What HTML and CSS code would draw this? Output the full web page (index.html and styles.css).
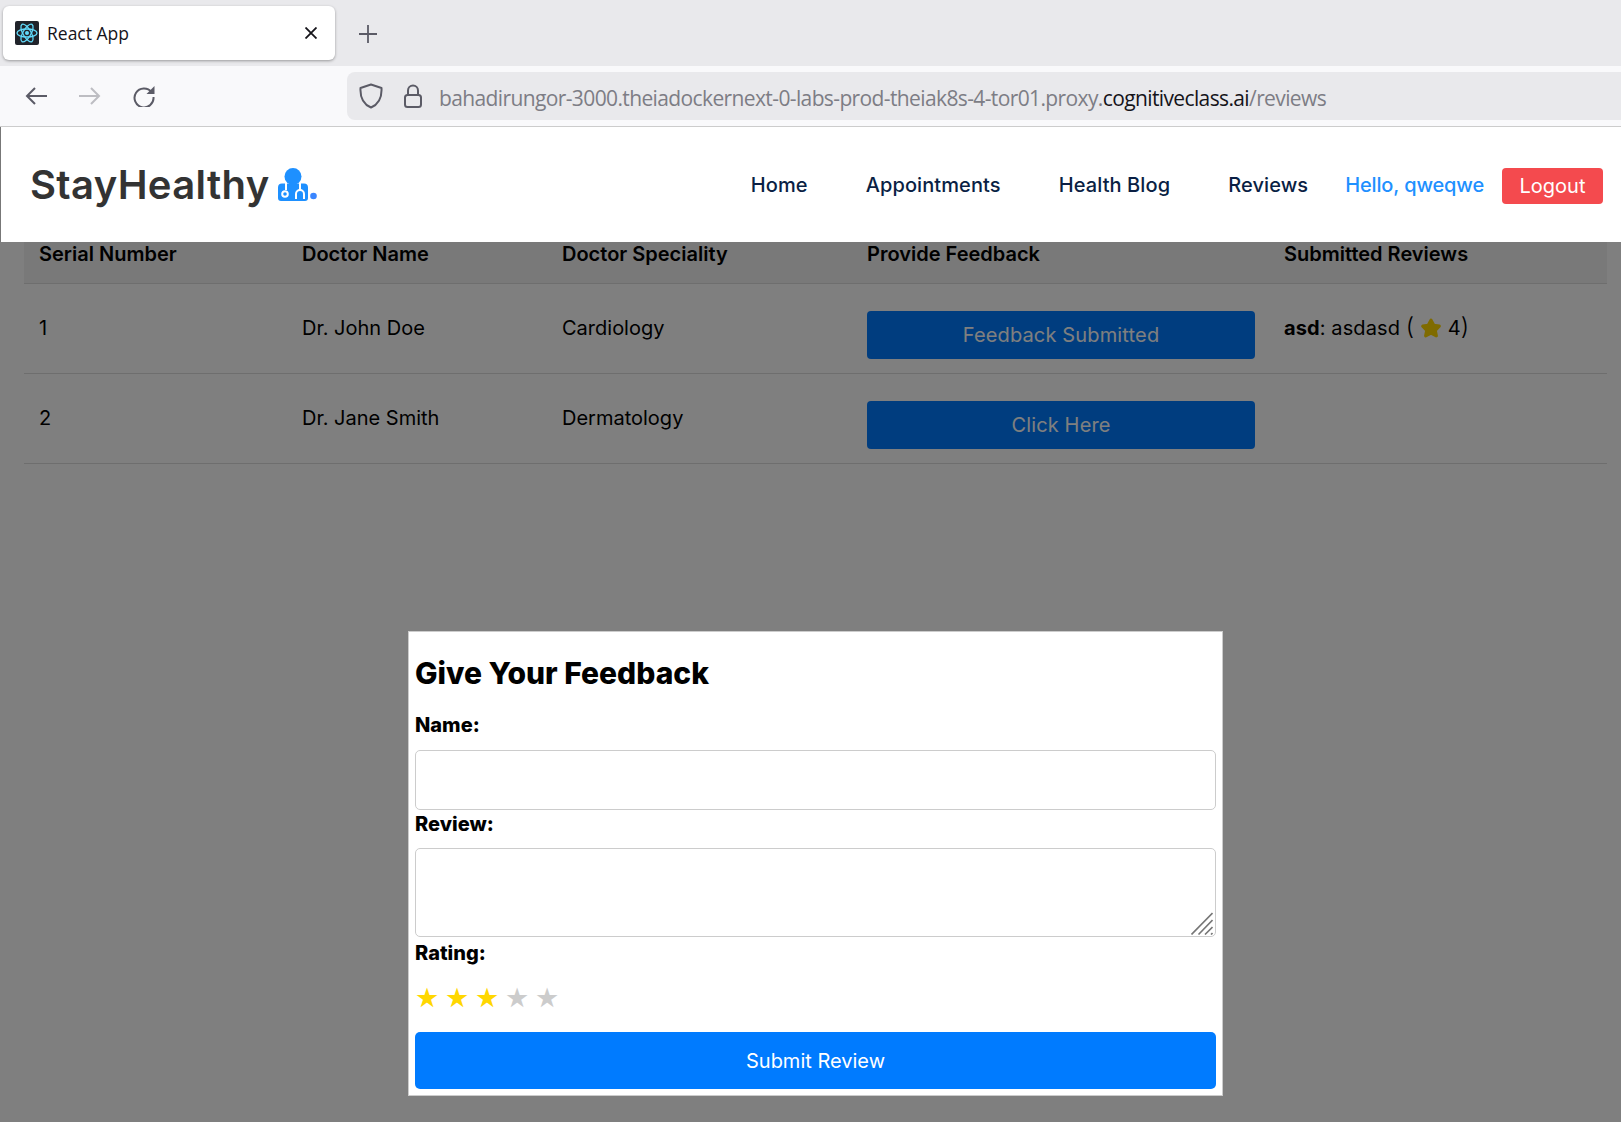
FILE: index.html
```html
<!DOCTYPE html>
<html lang="en">
<head>
    <meta charset="UTF-8">
    <title>React App</title>
    <link rel="stylesheet" href="styles.css">
</head>
<body>
    <div class="tabstrip">
        <div class="tab">
            <svg class="favicon" viewBox="0 0 24 24">
                <rect width="24" height="24" rx="2" fill="#20232a"/>
                <g fill="none" stroke="#61dafb" stroke-width="1.3">
                    <ellipse cx="12" cy="12" rx="10" ry="4"/>
                    <ellipse cx="12" cy="12" rx="10" ry="4" transform="rotate(60 12 12)"/>
                    <ellipse cx="12" cy="12" rx="10" ry="4" transform="rotate(120 12 12)"/>
                </g>
                <circle cx="12" cy="12" r="2" fill="#61dafb"/>
            </svg>
            <span class="tab-title">React App</span>
            <svg class="tab-close" viewBox="0 0 12 12">
                <path d="M0.500 0.500 11.500 11.500M11.500 0.500 0.500 11.500" stroke="#15141a" stroke-width="1.8" fill="none"/>
            </svg>
        </div>
        <svg class="new-tab" viewBox="0 0 18 18">
            <path d="M9 0V18M0 9H18" stroke="#5b5b66" stroke-width="1.8" fill="none"/>
        </svg>
    </div>
    <div class="toolbar">
        <svg class="tool tool-first" viewBox="0 0 22 20">
            <path d="M22 10H2M10 2 2 10l8 8" stroke="#5b5b66" stroke-width="2" fill="none"/>
        </svg>
        <svg class="tool" viewBox="0 0 22 20">
            <path d="M0 10H20M12 2l8 8-8 8" stroke="#bdbdc2" stroke-width="2" fill="none"/>
        </svg>
        <svg class="tool tool-reload" viewBox="0 0 22 22">
            <path d="M18.500 7A9.500 9.500 0 1 0 20.500 12" stroke="#5b5b66" stroke-width="2" fill="none"/>
            <path d="M21.500 1V9H13.500Z" fill="#5b5b66"/>
        </svg>
        <div class="urlbar">
            <svg class="shield" viewBox="0 0 24 26">
                <path d="M12 1.500 22.500 5C23 14 20 21 12 24.500 4 21 1 14 1.500 5Z" stroke="#5b5b66" stroke-width="2" fill="none" stroke-linejoin="round"/>
            </svg>
            <svg class="lock" viewBox="0 0 18 24">
                <path d="M4 11V6.500a5 5 0 0 1 10 0V11" stroke="#5b5b66" stroke-width="2" fill="none"/>
                <rect x="1" y="11" width="16" height="12" rx="2.500" stroke="#5b5b66" stroke-width="2" fill="none"/>
            </svg>
            <span class="url">bahadirungor-3000.theiadockernext-0-labs-prod-theiak8s-4-tor01.proxy.<span class="url-host">cognitiveclass.ai</span>/reviews</span>
        </div>
    </div>
    <nav class="navbar">
        <div class="logo">
            <span class="logo-text">StayHealthy</span>
            <svg class="logo-icon" viewBox="0 0 40 34">
                <circle cx="16" cy="8.500" r="8.500" fill="#1e90ff"/>
                <path d="M5 15.500h22a4 4 0 0 1 4 4V30a3 3 0 0 1-3 3H4a3 3 0 0 1-3-3V19.500a4 4 0 0 1 4-4Z" fill="#1e90ff"/>
                <g fill="none" stroke="#fff" stroke-width="2">
                    <path d="M9 15V22"/>
                    <circle cx="8" cy="26" r="2.800"/>
                    <path d="M19 31v-5a4 4 0 0 1 8 0v5"/>
                    <path d="M23 15v7"/>
                </g>
                <circle cx="36.500" cy="28" r="3.300" fill="#3a86ff"/>
            </svg>
        </div>
        <ul class="nav-links">
            <li class="nav-item">Home</li>
            <li class="nav-item">Appointments</li>
            <li class="nav-item">Health Blog</li>
            <li class="nav-item">Reviews</li>
            <li class="nav-user">Hello, qweqwe</li>
            <li><button class="logout">Logout</button></li>
        </ul>
    </nav>
    <main class="content">
        <table class="reviews">
            <colgroup>
                <col class="col-serial">
                <col class="col-name">
                <col class="col-speciality">
                <col class="col-feedback">
                <col class="col-submitted">
            </colgroup>
            <thead>
                <tr>
                    <th>Serial Number</th>
                    <th>Doctor Name</th>
                    <th>Doctor Speciality</th>
                    <th>Provide Feedback</th>
                    <th>Submitted Reviews</th>
                </tr>
            </thead>
            <tbody>
                <tr>
                    <td>1</td>
                    <td>Dr. John Doe</td>
                    <td>Cardiology</td>
                    <td class="cell-action"><button class="feedback-btn">Feedback Submitted</button></td>
                    <td class="cell-review">
                        <strong>asd</strong>: asdasd <span class="paren">(</span>
                        <svg class="small-star" viewBox="0 0 24 24">
                            <path d="M12 3.500 15 9 21 10 16.600 14.500 17.800 20.500 12 17.600 6.200 20.500 7.400 14.500 3 10 9 9Z" fill="#ffd700" stroke="#ffd700" stroke-width="3.500" stroke-linejoin="round"/>
                        </svg>
                        4<span class="paren">)</span>
                    </td>
                </tr>
                <tr>
                    <td>2</td>
                    <td>Dr. Jane Smith</td>
                    <td>Dermatology</td>
                    <td class="cell-action"><button class="feedback-btn">Click Here</button></td>
                    <td></td>
                </tr>
            </tbody>
        </table>
        <div class="overlay">
            <form class="modal">
                <h2 class="modal-title">Give Your Feedback</h2>
                <label class="field-label">Name:</label>
                <input class="field-input" type="text">
                <label class="field-label label-review">Review:</label>
                <div class="area-wrap">
                    <textarea class="field-area"></textarea>
                    <svg class="resize-handle" viewBox="0 0 22 23">
                        <path d="M0.500 22.500 21.500 1M7.500 22.500 21.500 8M14 22.500 21.500 15M20 22.500 21.500 21" stroke="#777" stroke-width="1.600" fill="none"/>
                    </svg>
                </div>
                <label class="field-label label-rating">Rating:</label>
                <div class="stars">
                    <span class="star star-on">★</span>
                    <span class="star star-on">★</span>
                    <span class="star star-on">★</span>
                    <span class="star">★</span>
                    <span class="star">★</span>
                </div>
                <button class="submit-btn" type="button">Submit Review</button>
            </form>
        </div>
    </main>
</body>
</html>
```

FILE: styles.css
```css
* {
    box-sizing: border-box;
}
html, body {
    height: 100%;
}
body {
    margin: 0;
    display: flex;
    flex-direction: column;
    overflow: hidden;
    background-color: #fff;
    color: #000;
    font-family: 'Inter', 'Noto Sans', sans-serif;
}

/* browser chrome */
.tabstrip {
    height: 66px;
    flex-shrink: 0;
    display: flex;
    align-items: flex-start;
    padding: 6px 0 0 3px;
    background-color: #e9e9ec;
}
.tab {
    width: 332px;
    height: 54px;
    display: flex;
    align-items: center;
    padding: 0 14px 0 12px;
    background-color: #fff;
    border-radius: 6px;
    box-shadow: 0 1px 3px rgba(0, 0, 0, 0.35);
}
.favicon {
    width: 24px;
    height: 24px;
}
.tab-title {
    margin-left: 8px;
    font-family: 'Open Sans', sans-serif;
    font-size: 17.500px;
    color: #15141a;
    flex-grow: 1;
}
.tab-close {
    width: 12px;
    height: 12px;
    margin-right: 4px;
}
.new-tab {
    width: 18px;
    height: 18px;
    margin: 19px 0 0 24px;
}
.toolbar {
    height: 61px;
    flex-shrink: 0;
    display: flex;
    align-items: flex-start;
    padding: 6px 0 0 25px;
    background-color: #f9f9fb;
    border-bottom: 1px solid #ccc;
}
.tool {
    width: 22px;
    height: 20px;
    margin: 14px 32px 0 0;
}
.tool-reload {
    height: 22px;
    margin: 13px 0 0 0;
}
.urlbar {
    margin-left: 192px;
    flex-grow: 1;
    height: 48px;
    display: flex;
    align-items: center;
    padding-left: 12px;
    background-color: #e9e9ec;
    border-radius: 8px 0 0 8px;
}
.shield {
    width: 24px;
    height: 26px;
}
.lock {
    width: 18px;
    height: 24px;
    margin-left: 21px;
}
.url {
    margin-left: 17px;
    padding-top: 4px;
    font-family: 'Open Sans', sans-serif;
    font-size: 21px;
    letter-spacing: -0.620px;
    color: #7d7d85;
    white-space: nowrap;
}
.url-host {
    color: #15141a;
}

/* navbar */
.navbar {
    height: 115px;
    flex-shrink: 0;
    display: flex;
    align-items: center;
    justify-content: space-between;
    padding: 0 18px 0 29px;
    background-color: #fff;
    border-left: 1px solid #777;
    position: relative;
    z-index: 2;
}
.logo {
    display: flex;
    align-items: center;
}
.logo-text {
    font-size: 40px;
    font-weight: 600;
    letter-spacing: 0.350px;
    color: #333;
}
.logo-icon {
    width: 40px;
    height: 34px;
    margin: 0 0 0 7px;
}
.nav-links {
    list-style: none;
    display: flex;
    align-items: center;
    margin: 0;
    padding: 0;
    font-size: 20px;
    font-weight: 500;
}
.nav-item {
    color: #0a1f44;
    margin-right: 58px;
    letter-spacing: 0.100px;
}
.nav-item:nth-child(4) {
    margin-right: 37px;
}
.nav-user {
    color: #1e90ff;
    margin-right: 18px;
    letter-spacing: -0.150px;
}
.logout {
    width: 101px;
    height: 36px;
    margin-top: 2px;
    background-color: #f44a4e;
    color: #fff;
    font-family: inherit;
    font-size: 20px;
    border: none;
    border-radius: 4px;
}

/* reviews table */
.content {
    position: relative;
    flex-grow: 1;
    padding: 0 14px 0 24px;
}
.reviews {
    width: 1583px;
    table-layout: fixed;
    border-collapse: collapse;
    font-size: 20px;
}
.col-serial { width: 263px; }
.col-name { width: 260px; }
.col-speciality { width: 305px; }
.col-feedback { width: 417px; }
.col-submitted { width: 338px; }
.reviews th {
    height: 41px;
    padding: 0 15px;
    text-align: left;
    vertical-align: top;
    font-weight: 600;
    line-height: 24px;
    background-color: #f2f2f2;
    border-bottom: 1px solid #ddd;
}
.reviews td {
    height: 90px;
    padding: 0 15px;
    border-bottom: 1px solid #ddd;
}
.reviews td.cell-action {
    padding-right: 14px;
}
.reviews strong {
    font-weight: 700;
}
.cell-review {
    letter-spacing: 0.100px;
}
.paren {
    font-size: 24px;
    font-weight: 300;
    line-height: 0;
}
.feedback-btn {
    width: 100%;
    height: 48px;
    margin-top: 13px;
    display: block;
    background-color: #007bff;
    color: #fff;
    font-family: inherit;
    font-size: 20px;
    letter-spacing: 0.150px;
    border: none;
    border-radius: 4px;
}
.small-star {
    width: 22px;
    height: 22px;
    vertical-align: -4px;
}

/* feedback popup */
.overlay {
    position: absolute;
    top: 0;
    left: 0;
    right: 0;
    bottom: 0;
    z-index: 1;
    display: flex;
    justify-content: center;
    align-items: flex-end;
    padding: 0 0 26px 10px;
    background-color: rgba(0, 0, 0, 0.5);
}
.modal {
    width: 815px;
    height: 465px;
    display: flex;
    flex-direction: column;
    padding: 0 6px;
    background-color: #fff;
    border: 1px solid #ccc;
}
.modal-title {
    margin: 21px 0 0;
    height: 40px;
    font-size: 30px;
    line-height: 40px;
    font-weight: 800;
}
.field-label {
    font-size: 20px;
    font-weight: 800;
    line-height: 24px;
}
.modal-title + .field-label {
    margin-top: 20px;
}
.field-input {
    height: 60px;
    margin-top: 13px;
    border: 1px solid #ccc;
    border-radius: 5px;
}
.label-review {
    margin-top: 2px;
}
.area-wrap {
    position: relative;
    height: 89px;
    margin-top: 12px;
}
.field-area {
    display: block;
    width: 100%;
    height: 100%;
    resize: none;
    border: 1px solid #ccc;
    border-radius: 5px;
}
.resize-handle {
    position: absolute;
    right: 3px;
    bottom: 2px;
    width: 22px;
    height: 23px;
}
.label-rating {
    margin-top: 4px;
}
.stars {
    display: flex;
    margin-top: 15px;
    height: 36px;
    align-items: center;
    font-family: 'DejaVu Sans', sans-serif;
    font-size: 27px;
    line-height: 36px;
}
.star {
    width: 30px;
    color: #ccc;
}
.star-on {
    color: #ffd700;
}
.submit-btn {
    height: 57px;
    margin-top: 16px;
    background-color: #007bff;
    color: #fff;
    font-family: inherit;
    font-size: 20px;
    border: none;
    border-radius: 5px;
}
```
